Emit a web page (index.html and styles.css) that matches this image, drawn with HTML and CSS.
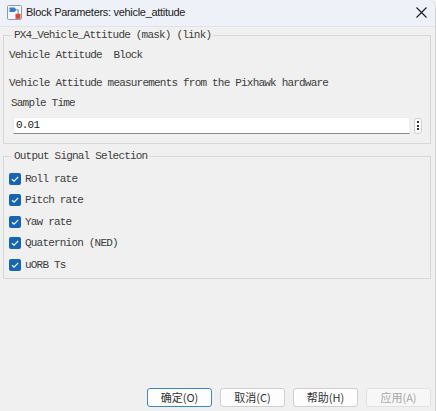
FILE: index.html
```html
<!DOCTYPE html>
<html>
<head>
<meta charset="utf-8">
<link rel="stylesheet" href="styles.css">
</head>
<body>
<div class="window">
  <div class="titlebar">
    <svg class="app-icon" width="15" height="15" viewBox="0 0 15 15">
      <rect x="0.5" y="0.5" width="14" height="14" rx="1" fill="#f3f6fa" stroke="#8c9bb0"/>
      <polygon points="2.5,2.5 7.5,2.5 9.5,4.8 7.5,7 2.5,7" fill="#2f7fd0"/>
      <polyline points="9.5,4.8 11.2,4.8 11.2,9" fill="none" stroke="#5b6b80" stroke-width="0.8"/>
      <rect x="8.5" y="8.8" width="5" height="5" fill="#e2462e"/>
    </svg>
    <span class="title">Block Parameters: vehicle_attitude</span>
    <span class="close">
      <svg width="11" height="11" viewBox="0 0 11 11"><path d="M0.5 0.5 L10.5 10.5 M10.5 0.5 L0.5 10.5" stroke="#1a1a1a" stroke-width="1.1" fill="none"/></svg>
    </span>
  </div>

  <div class="content">
    <fieldset class="group group-mask">
      <legend>PX4_Vehicle_Attitude (mask) (link)</legend>
      <div class="line">Vehicle Attitude  Block</div>
      <div class="line desc">Vehicle Attitude measurements from the Pixhawk hardware</div>
      <div class="line label">Sample Time</div>
      <div class="field-row">
        <div class="input">0.01</div>
        <div class="kebab"><i></i><i></i><i></i></div>
      </div>
    </fieldset>

    <fieldset class="group group-out">
      <legend>Output Signal Selection</legend>
      <div class="check"><span class="box"><svg width="12" height="12" viewBox="0 0 12 12"><path d="M3 6.2 L5.1 8.2 L9.2 3.9" stroke="#fff" stroke-width="1.2" fill="none"/></svg></span><span>Roll rate</span></div>
      <div class="check"><span class="box"><svg width="12" height="12" viewBox="0 0 12 12"><path d="M3 6.2 L5.1 8.2 L9.2 3.9" stroke="#fff" stroke-width="1.2" fill="none"/></svg></span><span>Pitch rate</span></div>
      <div class="check"><span class="box"><svg width="12" height="12" viewBox="0 0 12 12"><path d="M3 6.2 L5.1 8.2 L9.2 3.9" stroke="#fff" stroke-width="1.2" fill="none"/></svg></span><span>Yaw rate</span></div>
      <div class="check"><span class="box"><svg width="12" height="12" viewBox="0 0 12 12"><path d="M3 6.2 L5.1 8.2 L9.2 3.9" stroke="#fff" stroke-width="1.2" fill="none"/></svg></span><span>Quaternion (NED)</span></div>
      <div class="check"><span class="box"><svg width="12" height="12" viewBox="0 0 12 12"><path d="M3 6.2 L5.1 8.2 L9.2 3.9" stroke="#fff" stroke-width="1.2" fill="none"/></svg></span><span>uORB Ts</span></div>
    </fieldset>
  </div>

  <div class="buttons">
    <button class="btn primary">确定(O)</button>
    <button class="btn">取消(C)</button>
    <button class="btn">帮助(H)</button>
    <button class="btn disabled">应用(A)</button>
  </div>
</div>
</body>
</html>
```

FILE: styles.css
```css
* { box-sizing: border-box; }
html, body { margin: 0; padding: 0; }
body {
  width: 436px;
  height: 411px;
  background: #f0f0f0;
  overflow: hidden;
  font-family: "Liberation Mono", "Noto Sans CJK SC", monospace;
  font-size: 11px;
  letter-spacing: -0.8px;
  color: #3d3d3d;
}
.window {
  display: flex;
  flex-direction: column;
  height: 411px;
  border-right: 1px solid #d4d4d4;
  border-top-right-radius: 8px;
  overflow: hidden;
  background: #f0f0f0;
}
.titlebar {
  height: 27px;
  flex: none;
  display: flex;
  align-items: center;
  padding-left: 7px;
  background: #eef2f8;
  border-bottom: 1px solid #e1e3e6;
  font-family: "Liberation Sans", Arial, sans-serif;
  letter-spacing: 0;
}
.app-icon { flex: none; margin-top: -2px; }
.title {
  margin-left: 4px;
  font-size: 11px;
  letter-spacing: -0.3px;
  color: #1b1b1b;
  margin-top: -2px;
}
.close {
  margin-left: auto;
  margin-right: 8px;
  display: flex;
  margin-top: -2px;
}
.content {
  display: flex;
  flex-direction: column;
  gap: 4px;
  padding: 0 4px 0 3px;
}
.group {
  margin: 0;
  border: 1px solid #d8d8d8;
  padding: 0 0 0 5px;
  min-width: 0;
}
.group legend {
  margin-left: 3px;
  padding: 0 2px;
  line-height: 16px;
  color: #404040;
}
.group-mask { padding-top: 4px; padding-bottom: 9px; }
.line { line-height: 16px; white-space: pre; }
.desc { margin-top: 12px; }
.label { margin-top: 4px; padding-left: 2px; }
.field-row {
  display: flex;
  align-items: center;
  gap: 4px;
  margin-top: 6px;
  padding-left: 4px;
}
.input {
  width: 397px;
  height: 17px;
  background: #fff;
  border: 1px solid #ececec;
  border-bottom: 1px solid #8a8a8a;
  padding-left: 2px;
  line-height: 15px;
  color: #222;
}
.kebab {
  width: 8px;
  height: 16px;
  background: #fbfbfb;
  border: 1px solid #d0d0d0;
  border-radius: 3px;
  display: flex;
  flex-direction: column;
  align-items: center;
  justify-content: center;
  gap: 1.5px;
}
.kebab i {
  display: block;
  width: 2px;
  height: 2px;
  background: #333;
}
.group-out { padding-top: 4px; padding-bottom: 2px; }
.check {
  height: 21.5px;
  display: flex;
  align-items: center;
  gap: 4px;
}
.box {
  width: 12px;
  height: 12px;
  border-radius: 2px;
  background: #1464b8;
  display: flex;
}
.buttons {
  margin-top: auto;
  display: flex;
  justify-content: flex-end;
  gap: 8px;
  padding: 0 4px 4px 0;
}
.btn {
  width: 65px;
  height: 19px;
  padding: 0;
  margin: 0;
  background: #fdfdfd;
  border: 1px solid #cfcfcf;
  border-radius: 3px;
  font-family: "Noto Sans CJK SC", sans-serif;
  font-size: 11px;
  letter-spacing: 0;
  color: #333;
  line-height: 17px;
}
.btn.primary { border: 1.5px solid #3d86cc; }
.btn.disabled { color: #a8a8a8; border-color: #e2e2e2; background: #f7f7f7; }
```
